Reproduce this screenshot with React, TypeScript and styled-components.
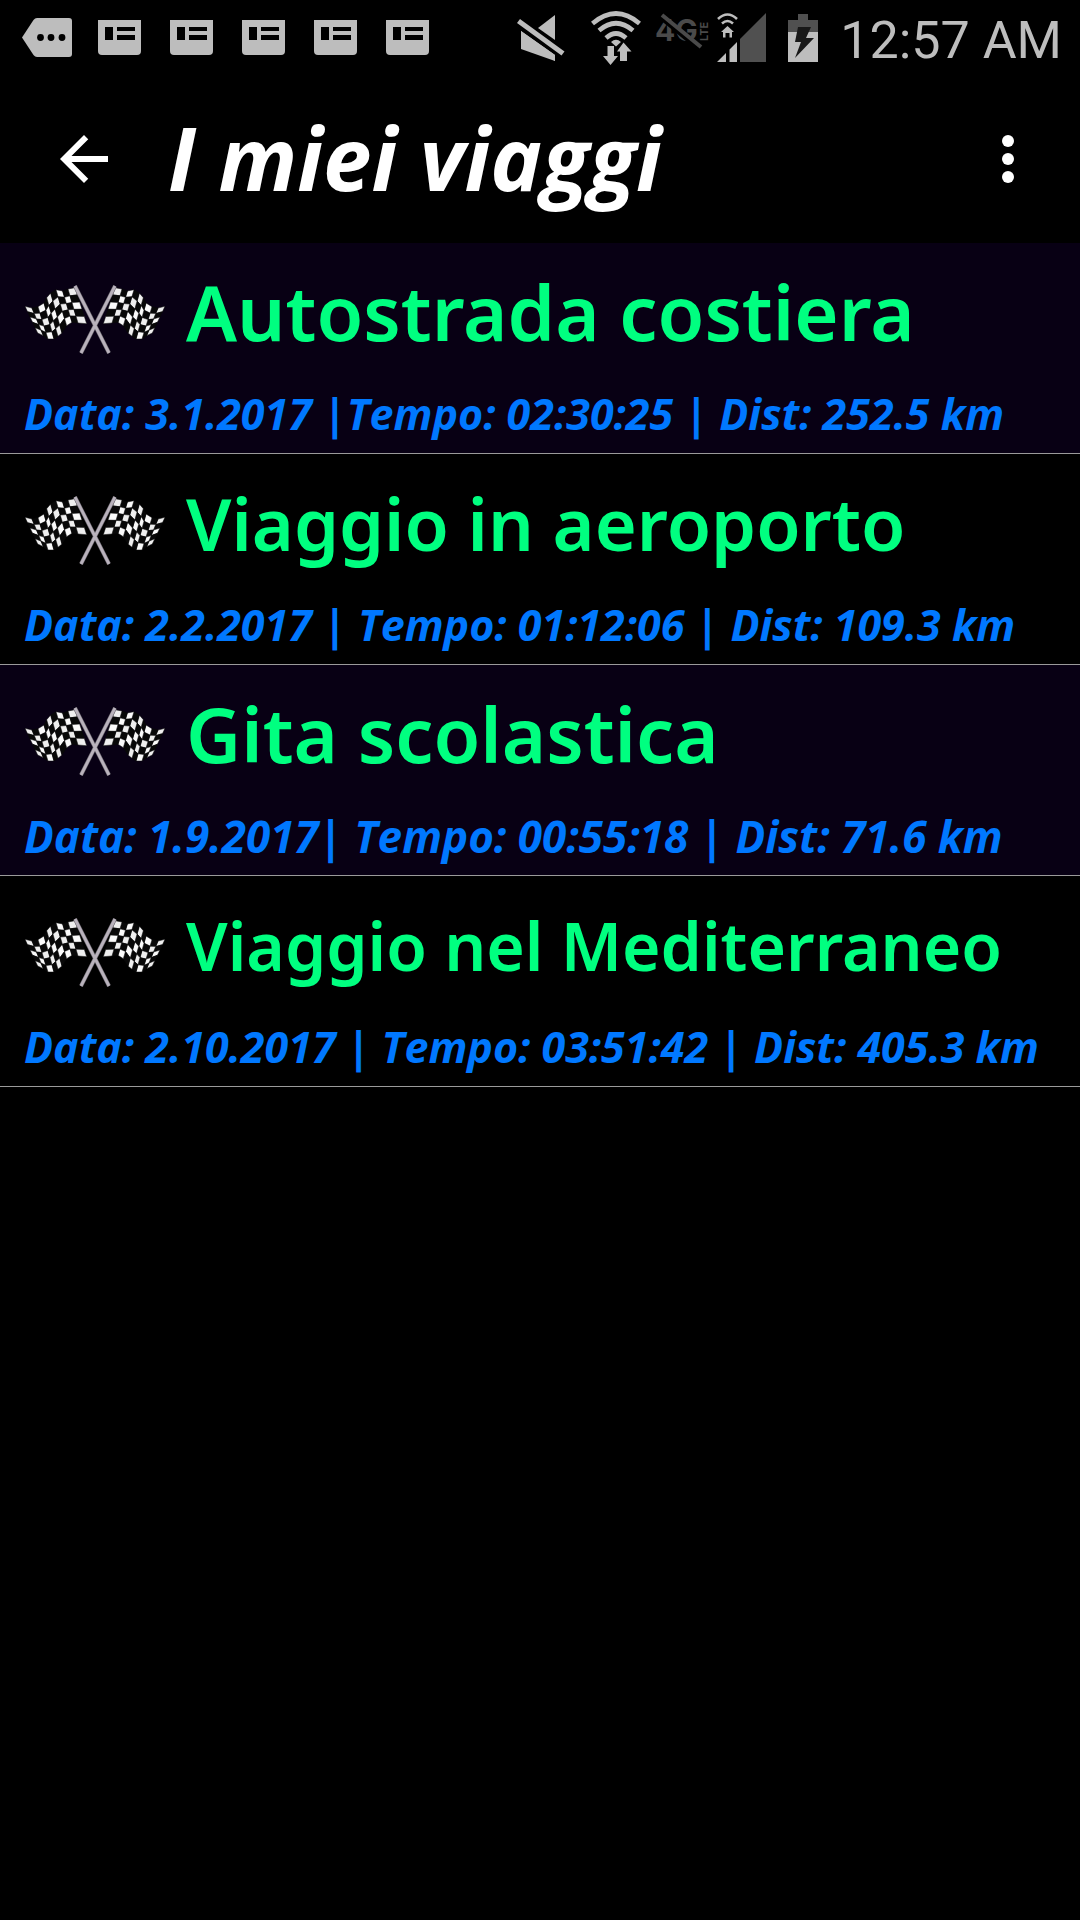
import React from 'react';
import styled, { createGlobalStyle } from 'styled-components';

const LIGHT = '#bdbdbd';
const DIM = '#505050';

const GlobalStyle = createGlobalStyle`
  *, *::before, *::after { box-sizing: border-box; }
  body {
    margin: 0;
    background: #000;
    font-family: "Open Sans", "Noto Sans", sans-serif;
  }
`;

const Screen = styled.div`
  min-height: 100vh;
  background: #000;
`;

const StatusBar = styled.div`
  display: flex;
  align-items: center;
  justify-content: space-between;
  height: 75px;
  padding: 0 18px 0 22px;
`;

const StatusGroup = styled.div<{ $gap: number }>`
  display: flex;
  align-items: center;
  gap: ${(p) => p.$gap}px;
`;

const Icon = styled.svg`
  display: block;
  flex: none;
`;

const Clock = styled.time`
  padding-top: 6px;
  color: ${LIGHT};
  font: 400 52px/69px Roboto, sans-serif;
  white-space: nowrap;
`;

const AppBar = styled.header`
  display: flex;
  align-items: center;
  height: 168px;
  padding: 0 36px 0 48px;
`;

const IconButton = styled.button`
  flex: none;
  padding: 0;
  border: 0;
  background: none;
  color: #fff;
  cursor: pointer;
`;

const PageTitle = styled.h1`
  flex: 1;
  margin: 0;
  padding: 0 0 4px 48px;
  color: #fff;
  font-size: 87px;
  font-style: italic;
  font-weight: 700;
  line-height: 120px;
  white-space: nowrap;
`;

const TripList = styled.ul`
  margin: 0;
  padding: 0;
  list-style: none;
`;

const TripRow = styled.li`
  padding: 15px 24px 7px;
  border-bottom: 1px solid #9a9a9a;
  background: #000;
  &:nth-child(odd) { background: #080014; }
`;

const TripHead = styled.div`
  display: flex;
  align-items: center;
  gap: 20px;
  height: 124px;
`;

const TripName = styled.h2<{ $size: number }>`
  margin: 0;
  padding-bottom: 16px;
  color: #00ff80;
  font-family: "Noto Sans", sans-serif;
  font-size: ${(p) => p.$size}px;
  font-weight: 600;
  line-height: 108px;
  white-space: nowrap;
`;

const TripMeta = styled.p<{ $size: number }>`
  margin: 0;
  color: #0078ff;
  font-size: ${(p) => p.$size}px;
  font-style: italic;
  font-weight: 700;
  line-height: 64px;
  white-space: nowrap;
`;

const MoreIcon = () => (
  <Icon width="50" height="39" viewBox="0 0 50 39" aria-hidden="true">
    <path d="M0 19.5 11.5 2Q13 0 15 0H47Q50 0 50 3V36Q50 39 47 39H15Q13 39 11.5 37Z" fill={LIGHT} />
    <circle cx="18.5" cy="19.5" r="3.4" />
    <circle cx="29" cy="19.5" r="3.4" />
    <circle cx="40" cy="19.5" r="3.4" />
  </Icon>
);

const CardIcon = () => (
  <Icon width="43" height="35" viewBox="0 0 43 35" aria-hidden="true">
    <path d="M0 0H43V31Q43 35 39 35H4Q0 35 0 31Z" fill={LIGHT} />
    <path d="M7 7H15V20H7ZM19 7H37V11H19ZM19 15H37V20H19Z" />
  </Icon>
);

const MuteIcon = () => (
  <Icon width="52" height="46" viewBox="0 0 52 46" fill={LIGHT} aria-hidden="true">
    <path d="M38 0V25L21 13Z" />
    <path d="M4 16 38 40V46L4 34Z" />
    <path d="M4 16V34H20L38 46V40Z" />
    <path d="M1.500 6 46 38.500" stroke="#000" strokeWidth="10" />
    <path d="M1.500 6 46 38.500" stroke={LIGHT} strokeWidth="5" />
  </Icon>
);

const WifiIcon = () => (
  <Icon width="50" height="54" viewBox="0 0 50 54" aria-hidden="true">
    <g fill="none" stroke={LIGHT} strokeWidth="4.600">
      <path d="M1.500 12.500Q25-7.500 48.500 12.500" />
      <path d="M8 19.500Q25 5 42 19.500" />
      <path d="M15 27Q25 18 35 27" />
    </g>
    <path d="M20 31Q25 26.500 30 31L25 35.500Z" fill={LIGHT} />
    <path d="M16.500 35H23V45H27L19.500 54 12 45H16.500ZM32.500 31.500 40.500 40.500H36V50H29V40.500H26Z" fill={LIGHT} />
  </Icon>
);

const NoLteIcon = () => (
  <Icon width="62" height="50" viewBox="-7 -2 62 50" aria-hidden="true">
    <g fill="#4a4a4a" fontFamily="Inter, sans-serif" fontWeight="700">
      <text x="0" y="26" fontSize="30">4G</text>
      <text transform="translate(53 26) rotate(-90)" fontSize="11">LTE</text>
    </g>
    <path d="M5 1 44 33" stroke="#000" strokeWidth="6" />
    <path d="M7 0 46 32" stroke="#4a4a4a" strokeWidth="4" />
  </Icon>
);

const SignalIcon = () => (
  <Icon width="49" height="49" viewBox="0 0 49 49" aria-hidden="true">
    <path d="M49 0V49H23V26Z" fill={DIM} />
    <path d="M0 49 9 40V49ZM12.500 49V36.500L20 29V49Z" fill={LIGHT} />
    <g fill="none" stroke={LIGHT} strokeWidth="2.600">
      <path d="M1 6Q10.500-3 20 6" />
      <path d="M5 10.500Q10.500 5.500 16 10.500" />
    </g>
    <path d="M10.500 13 17 19H15V24.500H12.500V20H8.500V24.500H6V19H4Z" fill={LIGHT} />
  </Icon>
);

const BatteryIcon = () => (
  <Icon width="30" height="48" viewBox="0 0 30 48" aria-hidden="true">
    <path d="M10 0H20V6H30V18H0V6H10Z" fill={DIM} />
    <path d="M0 18H30V48H0Z" fill={LIGHT} />
    <path d="M10 13H23L18 24H26L7 44 13 28H7Z" fill="#181818" />
  </Icon>
);

type Point = [number, number];

const TOP_EDGE: Point[] = [
  [15, 76], [36, 81], [54, 77], [72, 66], [80, 50], [92, 36], [108, 26], [128, 30], [144, 24], [165, 20],
];
const BOTTOM_EDGE: Point[] = [
  [53, 156], [70, 164], [84, 174], [102, 174], [114, 166], [126, 156], [140, 134], [156, 124], [174, 126], [200, 128],
];
const ROWS = 5;
const SHADES = ['#eeeeee', '#c6c6c6', '#fafafa', '#a2a2a2'];

const knot = (col: number, row: number): Point => {
  const t = row / ROWS;
  const [ax, ay] = TOP_EDGE[col];
  const [bx, by] = BOTTOM_EDGE[col];
  return [(ax + (bx - ax) * t) / 3, (ay + (by - ay) * t) / 3];
};

const cells = Array.from({ length: (TOP_EDGE.length - 1) * ROWS }, (_, i) => {
  const col = i % (TOP_EDGE.length - 1);
  const row = Math.floor(i / (TOP_EDGE.length - 1));
  const corners = [knot(col, row), knot(col + 1, row), knot(col + 1, row + 1), knot(col, row + 1)];
  return {
    key: i,
    points: corners.map((c) => c.join(',')).join(' '),
    fill: (col + row) % 2 ? '#080808' : SHADES[(col * 3 + row) % 4],
  };
});

const Cloth = () => (
  <g stroke="#080808" strokeWidth="0.500">
    {cells.map((c) => (
      <polygon key={c.key} points={c.points} fill={c.fill} />
    ))}
  </g>
);

const FlagsIcon = () => (
  <Icon width="142" height="72" viewBox="4 3 142 72" aria-hidden="true">
    <Cloth />
    <g transform="translate(150 0) scale(-1 1)">
      <Cloth />
    </g>
    <path d="M95 5 61 72M55 5 89 72" stroke="#6d6870" strokeWidth="4" />
    <path d="M95 5 61 72M55 5 89 72" stroke="#b9b2bc" strokeWidth="2.800" />
  </Icon>
);

const trips = [
  { name: 'Autostrada costiera', size: 76, metaSize: 43, meta: 'Data: 3.1.2017 |Tempo: 02:30:25 | Dist: 252.5 km' },
  { name: 'Viaggio in aeroporto', size: 72, metaSize: 43, meta: 'Data: 2.2.2017 | Tempo: 01:12:06 | Dist: 109.3 km' },
  { name: 'Gita scolastica', size: 76, metaSize: 44, meta: 'Data: 1.9.2017| Tempo: 00:55:18 | Dist: 71.6 km' },
  { name: 'Viaggio nel Mediterraneo', size: 66, metaSize: 43, meta: 'Data: 2.10.2017 | Tempo: 03:51:42 | Dist: 405.3 km' },
];

export default function App() {
  return (
    <Screen>
      <GlobalStyle />
      <StatusBar>
        <StatusGroup $gap={26}>
          <MoreIcon />
          <StatusGroup $gap={29}>
            {[0, 1, 2, 3, 4].map((n) => (
              <CardIcon key={n} />
            ))}
          </StatusGroup>
        </StatusGroup>
        <StatusGroup $gap={22}>
          <MuteIcon />
          <StatusGroup $gap={7}>
            <WifiIcon />
            <NoLteIcon />
            <SignalIcon />
          </StatusGroup>
          <BatteryIcon />
          <Clock>12:57 AM</Clock>
        </StatusGroup>
      </StatusBar>
      <AppBar>
        <IconButton type="button" aria-label="Indietro">
          <Icon width="72" height="72" viewBox="0 0 24 24" fill="currentColor">
            <path d="M20 11H7.830l5.590-5.590L12 4l-8 8 8 8 1.410-1.410L7.830 13H20v-2z" />
          </Icon>
        </IconButton>
        <PageTitle>I miei viaggi</PageTitle>
        <IconButton type="button" aria-label="Altre opzioni">
          <Icon width="72" height="72" viewBox="0 0 24 24" fill="currentColor">
            <circle cx="12" cy="6" r="2" />
            <circle cx="12" cy="12" r="2" />
            <circle cx="12" cy="18" r="2" />
          </Icon>
        </IconButton>
      </AppBar>
      <main>
        <TripList>
          {trips.map((trip) => (
            <TripRow key={trip.name}>
              <TripHead>
                <FlagsIcon />
                <TripName $size={trip.size}>{trip.name}</TripName>
              </TripHead>
              <TripMeta $size={trip.metaSize}>{trip.meta}</TripMeta>
            </TripRow>
          ))}
        </TripList>
      </main>
    </Screen>
  );
}
